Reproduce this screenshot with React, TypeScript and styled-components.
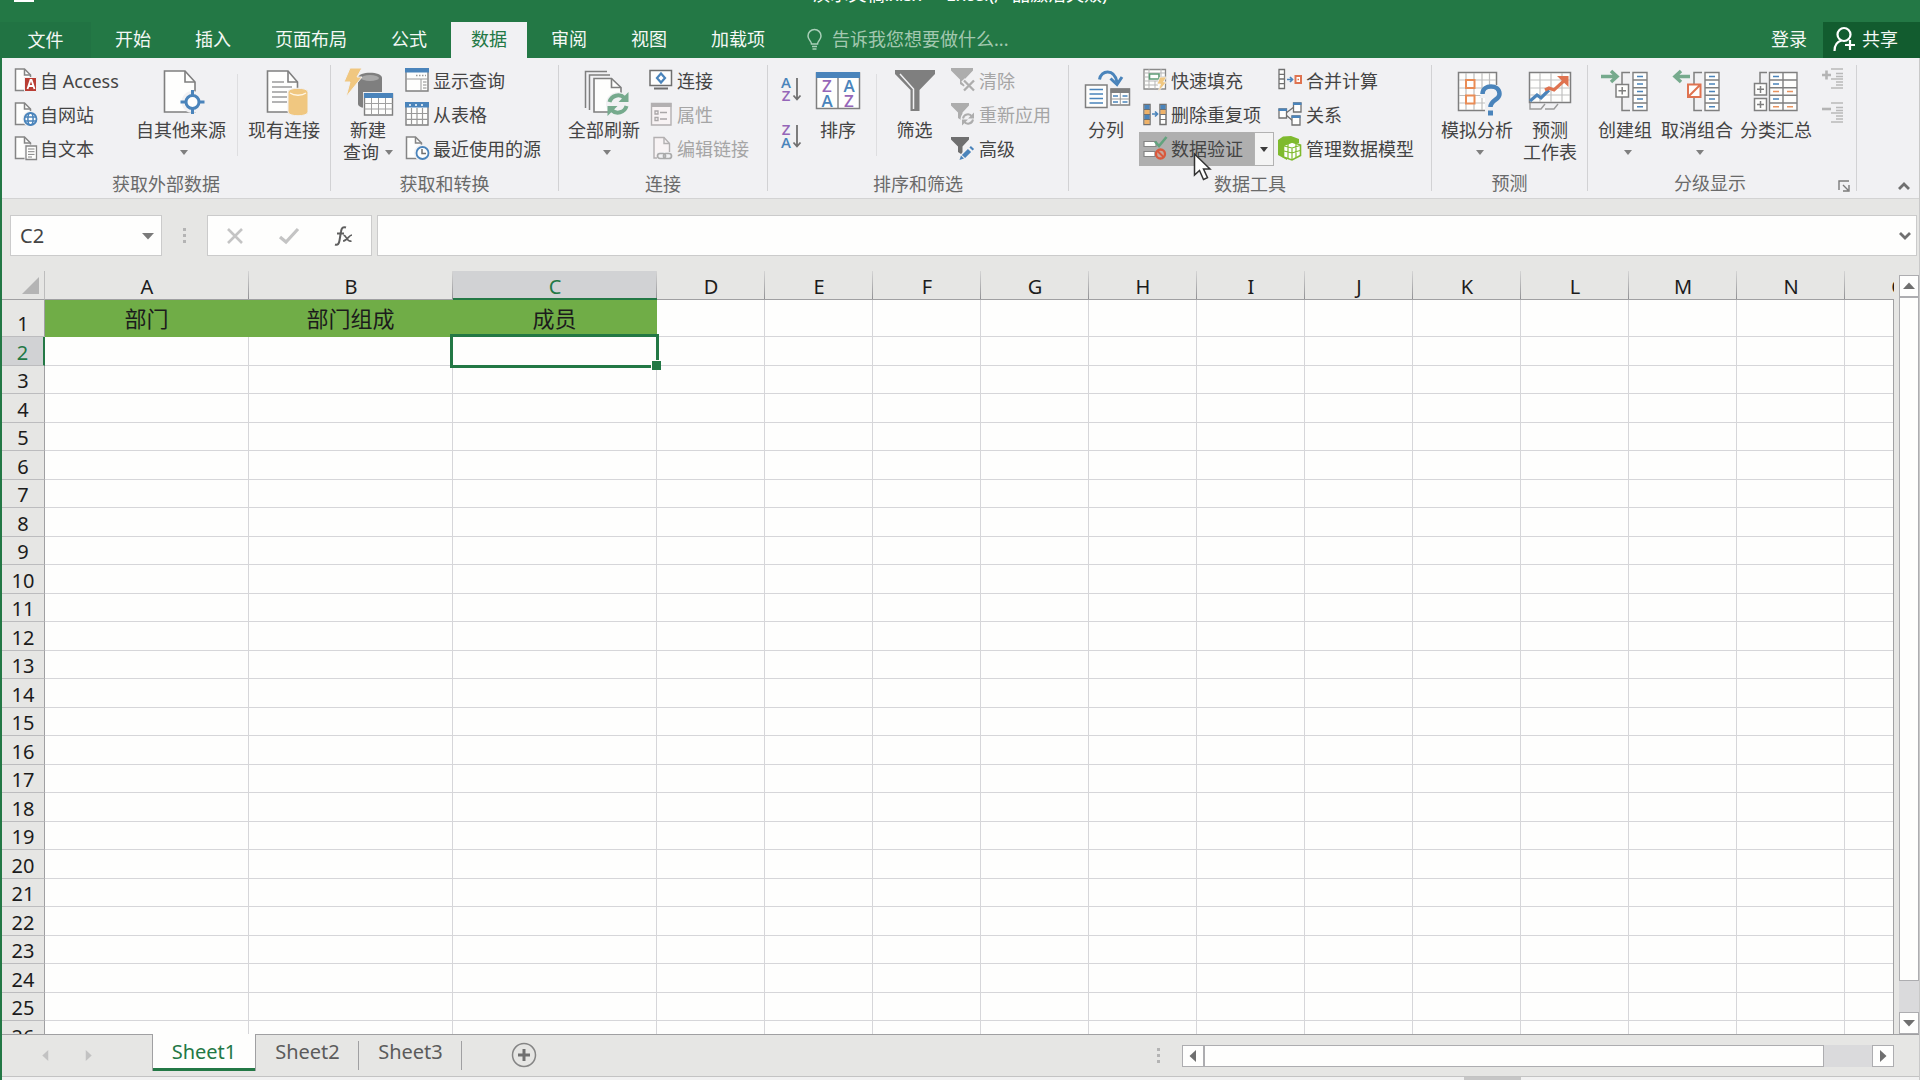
import React from "react";
import styled, { createGlobalStyle, css } from "styled-components";

const color = {
  green: "#237845",
  greenDark: "#125c2f",
  ribbon: "#f1f1f3",
  chrome: "#e6e6e4",
  white: "#fefefd",
  text: "#444444",
  mute: "#6a6a6a",
  off: "#a5a5a5",
  line: "#d2d2d4",
  edge: "#a0a0a2",
  blue: "#4a84bb",
  gray: "#7f7f7f",
  sand: "#f0c780",
  mint: "#76aa8d",
  orange: "#df7350",
  violet: "#9566b8",
};

const GlobalStyle = createGlobalStyle`
  * { box-sizing: border-box; }
  body {
    margin: 0;
    overflow: hidden;
    font-family: "Noto Sans", "Noto Sans CJK SC", sans-serif;
    font-size: 18px;
    color: ${color.text};
  }
  button, input {
    margin: 0;
    padding: 0;
    border: 0;
    background: none;
    font: inherit;
    color: inherit;
  }
`;

/* ---------- window ---------- */

const Window = styled.div`
  display: flex;
  flex-direction: column;
  height: 100vh;
  background: ${color.chrome};
`;

const TitleBar = styled.header`
  display: flex;
  flex: none;
  height: 22px;
  padding: 0 14px;
  overflow: hidden;
  background: ${color.green};
  color: #ffffff;
`;

const TitleSide = styled.div`
  flex: 1;
  margin-top: -20px;
`;

const TitleText = styled.h1`
  margin: -18px 0 0;
  font-size: 18px;
  font-weight: 400;
  line-height: 24px;
  white-space: pre;
`;

const TabBar = styled.nav`
  display: flex;
  flex: none;
  align-items: stretch;
  height: 36px;
  background: ${color.green};
  color: #f4f8f5;
`;

const FileTab = styled.button`
  width: 91px;
  margin-right: 4px;
  padding-bottom: 2px;
  background: #217343;
`;

const Tabs = styled.div`
  display: flex;
  gap: 4px;
`;

const Tab = styled.button<{ $active?: boolean }>`
  padding: 0 20px 4px;
  white-space: nowrap;
  ${(p) => p.$active && css`background: ${color.ribbon}; color: ${color.green};`}
`;

const TellMe = styled.label`
  display: flex;
  flex: 1;
  align-items: center;
  gap: 10px;
  padding: 0 0 2px 22px;
`;

const TellMeInput = styled.input`
  width: 240px;
  outline: 0;
  &::placeholder { color: #a3c8b0; opacity: 1; }
`;

const SignIn = styled.button`
  padding: 0 16px 4px;
`;

const Share = styled.button`
  display: flex;
  align-items: center;
  gap: 5px;
  width: 97px;
  padding: 0 0 4px 10px;
  background: ${color.greenDark};
`;

const Body = styled.main`
  display: flex;
  flex: 1;
  flex-direction: column;
  min-height: 0;
  border-left: 2px solid ${color.green};
  border-right: 1px solid #c9c9c9;
`;

/* ---------- ribbon ---------- */

const Ribbon = styled.section`
  display: flex;
  flex: none;
  height: 141px;
  background: ${color.ribbon};
  border-bottom: 1px solid #d3d3d3;
`;

const GroupBox = styled.section`
  display: flex;
  flex-direction: column;
  padding-top: 6px;
`;

const GroupBody = styled.div<{ $left?: number; $right?: number }>`
  display: flex;
  height: 102px;
  padding: 0 ${(p) => p.$right ?? 0}px 0 ${(p) => p.$left ?? 4}px;
`;

const GroupFoot = styled.footer`
  display: flex;
  align-items: center;
  height: 34px;
  padding-top: 4px;
  color: ${color.mute};
`;

const GroupTitle = styled.h2`
  flex: 1;
  margin: 0;
  font-size: 18px;
  font-weight: 400;
  line-height: 24px;
  text-align: center;
`;

const Launcher = styled.button`
  width: 24px;
  height: 20px;
`;

const Divider = styled.i`
  flex: none;
  width: 1px;
  margin: 7px 0;
  background: ${color.line};
`;

const InnerDivider = styled.i<{ $before: number; $after: number }>`
  flex: none;
  width: 1px;
  margin: 10px ${(p) => p.$after}px 10px ${(p) => p.$before}px;
  background: #dedee0;
`;

const LargeButton = styled.button<{ $width: number }>`
  display: flex;
  flex: none;
  flex-direction: column;
  align-items: center;
  justify-content: flex-start;
  width: ${(p) => p.$width}px;
  padding-top: 4px;
  line-height: 22px;
  white-space: nowrap;
`;

const Caption = styled.span`
  display: flex;
  align-items: center;
  gap: 6px;
  height: 22px;
  &:first-of-type { margin-top: 3px; }
`;

const CaretLine = styled(Caption)`
  padding-left: 6px;
`;

const Caret = styled.i<{ $dark?: boolean }>`
  border: 4px solid transparent;
  border-top: 5px solid ${(p) => (p.$dark ? "#3b3b3b" : color.gray)};
  border-bottom: 0;
`;

const SmallColumn = styled.div<{ $width: number }>`
  display: flex;
  flex: none;
  flex-direction: column;
  width: ${(p) => p.$width}px;
`;

const SmallButton = styled.button`
  display: flex;
  align-items: center;
  align-self: flex-start;
  gap: 4px;
  height: 34px;
  padding: 0 4px 2px;
  white-space: nowrap;
  &:disabled { color: ${color.off}; }
`;

const SourceButton = styled(SmallButton)`
  gap: 2px;
`;

const SortButton = styled.button`
  width: 38px;
  height: 47px;
  padding-top: 8px;
`;

const Split = styled.div`
  position: relative;
  display: flex;
  height: 34px;
`;

const SplitMain = styled(SmallButton)`
  flex: 1;
  background: #afafaf;
`;

const SplitArrow = styled.button`
  display: grid;
  place-items: center;
  width: 20px;
  background: #f4f4f4;
  border: 1px solid #b2b2b2;
`;

const Pointer = styled.svg`
  position: absolute;
  z-index: 2;
  top: 20px;
  left: 54px;
  width: 20px;
  height: 30px;
`;

const Collapse = styled.button`
  align-self: flex-end;
  margin-left: auto;
  width: 30px;
  height: 26px;
  padding-bottom: 4px;
`;

/* ---------- formula bar ---------- */

const FormulaBar = styled.section`
  display: flex;
  flex: none;
  height: 72px;
  padding: 16px 2px 15px 8px;
`;

const Field = styled.div`
  display: flex;
  align-items: center;
  background: ${color.white};
  border: 1px solid #cbcbcb;
`;

const NameField = styled(Field)`
  width: 152px;
  padding-left: 9px;
`;

const NameInput = styled.input`
  flex: 1;
  min-width: 0;
  font-size: 20px;
`;

const NameArrow = styled.button`
  width: 26px;
  height: 100%;
  line-height: 0;
`;

const Grip = styled.i`
  align-self: center;
  width: 3px;
  height: 15px;
  background: repeating-linear-gradient(#b4b4b4 0 3px, transparent 3px 6px);
`;

const BarGrip = styled(Grip)`
  margin: 0 21px;
`;

const FormulaTools = styled(Field)`
  width: 165px;
  margin-right: 5px;
`;

const ToolButton = styled.button`
  flex: 1;
  height: 100%;
  line-height: 0;
`;

const FormulaField = styled(Field)`
  flex: 1;
`;

const FormulaInput = styled.input`
  flex: 1;
  height: 100%;
  padding: 0 8px;
`;

const ExpandButton = styled.button`
  width: 22px;
  line-height: 0;
`;

/* ---------- sheet ---------- */

const SheetArea = styled.section`
  display: flex;
  flex: 1;
  gap: 5px;
  min-height: 0;
`;

const Viewport = styled.div`
  position: relative;
  flex: 1;
  min-width: 0;
  overflow: hidden;
  &::after {
    content: "";
    position: absolute;
    top: 28px;
    right: 0;
    bottom: 0;
    width: 1px;
    background: ${color.edge};
  }
`;

const Sheet = styled.table`
  width: 1951px;
  table-layout: fixed;
  border-collapse: separate;
  border-spacing: 0;
  background: ${color.white};
  color: #1c1c1c;
  font-size: 20px;
  line-height: 24px;
`;

const Col = styled.col<{ $width: number }>`
  width: ${(p) => p.$width}px;
`;

const Corner = styled.th`
  height: 29px;
  padding: 0 5px 0 0;
  background: ${color.chrome};
  border-right: 1px solid #bdbdbd;
  border-bottom: 1px solid ${color.edge};
  line-height: 0;
  text-align: right;
`;

const ColHead = styled.th<{ $active?: boolean }>`
  height: 29px;
  padding: 2px 0 0;
  background:
    linear-gradient(#d5d5d5, #8f8f92) right / 1px 100% no-repeat,
    ${(p) => (p.$active ? "#d1d2d4" : color.chrome)};
  box-shadow: inset 0 ${(p) => (p.$active ? `-2px ${color.green}` : `-1px ${color.edge}`)};
  color: ${(p) => (p.$active ? color.green : "inherit")};
  font-weight: 400;
`;

const RowHead = styled.th<{ $active?: boolean }>`
  padding: 0;
  vertical-align: bottom;
  background: ${(p) => (p.$active ? "#d1d2d4" : color.chrome)};
  border-right: ${(p) => (p.$active ? `2px solid ${color.green}` : `1px solid ${color.edge}`)};
  border-bottom: 1px solid #bcbcbe;
  color: ${(p) => (p.$active ? color.green : "inherit")};
  font-weight: 400;
`;

const Row = styled.tr`
  height: 28px;
  &:nth-child(even) { height: 29px; }
  &:first-child { height: 37px; }
`;

const Cell = styled.td<{ $filled?: boolean }>`
  position: relative;
  padding: 0;
  border-right: 1px solid #d6d6d9;
  border-bottom: 1px solid #d6d6d9;
  ${(p) => p.$filled && css`
    background: #70ad47;
    border-color: #70ad47;
    font-size: 22px;
    text-align: center;
  `}
`;

const Selection = styled.div`
  position: absolute;
  z-index: 1;
  inset: -3px;
  border: 3px solid ${color.green};
  &::after {
    content: "";
    position: absolute;
    right: -5px;
    bottom: -5px;
    width: 9px;
    height: 9px;
    background: ${color.green};
    border: solid #ffffff;
    border-width: 1px 0 0 1px;
  }
`;

const VScroll = styled.div`
  display: flex;
  flex-direction: column;
  width: 20px;
  margin-top: 4px;
  background: #dadadc;
`;

const ScrollArrow = styled.button`
  flex: none;
  width: 22px;
  height: 22px;
  background: ${color.white};
  border: 1px solid #adadb0;
  line-height: 0;
`;

const VArrow = styled(ScrollArrow)`
  width: 20px;
`;

const Thumb = styled.div`
  flex: 1;
  background: ${color.white};
  border: 1px solid #adadb0;
`;

const TrackRest = styled.div<{ $size: number }>`
  flex: 0 0 ${(p) => p.$size}px;
`;

/* ---------- bottom ---------- */

const SheetBar = styled.footer`
  display: flex;
  flex: none;
  height: 42px;
  border-top: 1px solid ${color.edge};
`;

const SheetNav = styled.div`
  display: flex;
  align-items: center;
  width: 150px;
  padding-left: 22px;
`;

const NavButton = styled.button`
  width: 43px;
  height: 36px;
  line-height: 0;
`;

const SheetTab = styled.button<{ $active?: boolean }>`
  position: relative;
  width: 103px;
  height: 35px;
  padding-bottom: 2px;
  font-size: 20px;
  line-height: 24px;
  color: #5b5b5b;
  ${(p) => p.$active
    ? css`
        width: 104px;
        height: 37px;
        margin-top: -1px;
        background: ${color.white};
        border: solid ${color.edge};
        border-width: 0 1px;
        box-shadow: inset 0 -3px ${color.green};
        color: ${color.green};
      `
    : css`
        &::after {
          content: "";
          position: absolute;
          top: 6px;
          right: 0;
          width: 1px;
          height: 29px;
          background: ${color.edge};
        }
      `}
`;

const AddSheet = styled.button`
  width: 28px;
  height: 40px;
  margin-left: 48px;
  line-height: 0;
`;

const BottomGrip = styled(Grip)`
  margin: 0 22px 0 auto;
`;

const HScroll = styled.div`
  display: flex;
  flex: 0 1 712px;
  align-self: center;
  height: 22px;
  margin-right: 25px;
  background: #dadadc;
`;

const StatusBar = styled.div`
  display: flex;
  flex: none;
  justify-content: flex-end;
  height: 4px;
  padding-right: 398px;
  background: #f1f1f1;
  border-top: 1px solid #c3c3c3;
`;

const StatusMark = styled.i`
  width: 57px;
  background: #c6c6c6;
`;

/* ---------- icons ---------- */

const Svg = styled.svg<{ $w: number; $h: number }>`
  flex: none;
  display: block;
  width: ${(p) => p.$w}px;
  height: ${(p) => p.$h}px;
  overflow: visible;
`;

const InlineSvg = styled(Svg)`
  display: inline-block;
`;

const Letter = styled.text<{ $size: number }>`
  font-family: "Open Sans", "Noto Sans", sans-serif;
  font-size: ${(p) => p.$size}px;
  font-weight: 600;
  text-anchor: middle;
`;

type Kids = { children: React.ReactNode };
const Big = ({ children }: Kids) => (
  <Svg $w={48} $h={48} viewBox="0 0 48 48" fill="none" aria-hidden="true">{children}</Svg>
);
const Small = ({ children }: Kids) => (
  <Svg $w={24} $h={24} viewBox="0 0 24 24" fill="none" aria-hidden="true">{children}</Svg>
);

const SmallPage = () => (
  <>
    <path d="M1.500 1h9l6 6v15.500h-15z" fill="#fefefd" stroke="#858585" strokeWidth="1.500" />
    <path d="M10.500 1v6h6" stroke="#858585" strokeWidth="1.500" />
  </>
);

const AccessIcon = () => (
  <Small>
    <SmallPage />
    <path d="M10.500 9.500h12v14h-12z" fill="#b93d34" stroke="#f1f1f3" />
    <path d="M13.500 21l3-9h1l3 9M14.500 18h5" stroke="#fff" strokeWidth="1.800" />
  </Small>
);

const WebIcon = () => (
  <Small>
    <SmallPage />
    <circle cx="16.500" cy="17" r="6.500" fill="#fefefd" stroke="#f1f1f3" strokeWidth="3" />
    <circle cx="16.500" cy="17" r="6" fill="#fefefd" stroke={color.blue} strokeWidth="1.800" />
    <ellipse cx="16.500" cy="17" rx="2.600" ry="6" stroke={color.blue} strokeWidth="1.500" />
    <path d="M11 15h11M11 19h11" stroke={color.blue} strokeWidth="1.500" />
  </Small>
);

const TextIcon = () => (
  <Small>
    <SmallPage />
    <path d="M12 10h10.500v13.500H12z" fill="#fefefd" stroke="#f1f1f3" strokeWidth="3" />
    <path d="M12 10h10.500v13.500H12z" fill="#fefefd" stroke="#858585" strokeWidth="1.300" />
    <path d="M14 13h6.500M14 15.700h6.500M14 18.400h6.500M14 21h4" stroke="#858585" />
  </Small>
);

const OtherSourceIcon = () => (
  <Big>
    <path d="M7.500 3h20.500l10 11v30h-30.500z" fill="#fefefd" stroke={color.gray} strokeWidth="1.600" />
    <path d="M28 3v11h10" stroke={color.gray} strokeWidth="1.600" />
    <circle cx="35.500" cy="34" r="11" fill="#f1f1f3" />
    <circle cx="35.500" cy="34" r="6.500" fill="#fefefd" stroke={color.blue} strokeWidth="3" />
    <path d="M35.500 22v6M35.500 40v6M23.500 34h6M41.500 34h6" stroke={color.blue} strokeWidth="3" />
  </Big>
);

const ConnectionsIcon = () => (
  <Big>
    <path d="M7.500 3h20.500l9.500 11v30h-30z" fill="#fefefd" stroke={color.gray} strokeWidth="1.600" />
    <path d="M28 3v11h9.500" stroke={color.gray} strokeWidth="1.600" />
    <path d="M12 14h12M12 19h20M12 24h15M12 29h15M12 34h15" stroke="#9a9a9a" strokeWidth="1.500" />
    <path d="M28 24c0-5 20-5 20 0v20c0 5-20 5-20 0z" fill={color.sand} stroke="#f1f1f3" />
    <path d="M30 25c4 3 12 3 16 0" stroke="#fff6e4" strokeWidth="1.300" />
  </Big>
);

const NewQueryIcon = () => (
  <Big>
    <path d="M14 10c0-7 24-7 24 0v26c0 6-24 6-24 0z" fill={color.gray} />
    <ellipse cx="26" cy="10" rx="9" ry="3" fill="#a8a8a8" />
    <path d="M6 0h12l-5 9h5L2 29l4-15H0z" fill={color.sand} stroke="#f1f1f3" />
    <path d="M19 24h30v24h-30z" fill="#f1f1f3" />
    <path d="M20.500 26h28v21h-28z" fill="#fefefd" stroke={color.gray} strokeWidth="1.400" />
    <path d="M20 25h29v5H20z" fill={color.blue} />
    <path d="M27.500 30v17M34.500 30v17M41.500 30v17M20.500 35.500h28M20.500 41h28" stroke="#a0a0a0" />
  </Big>
);

const QueryPaneIcon = () => (
  <Small>
    <path d="M1 1.500h22v21.500H1z" fill="#fefefd" stroke={color.gray} strokeWidth="1.400" />
    <path d="M0 0h24v4.500H0z" fill={color.blue} />
    <path d="M1 11h22M16 11v12" stroke="#9a9a9a" />
    <path d="M11 7.500h10" stroke="#9a9a9a" strokeWidth="1.500" strokeDasharray="1.500 1.500" />
    <path d="M18 14h3.500M18 17h3.500M18 20h3.500" stroke="#8a8a8a" />
  </Small>
);

const TableIcon = () => (
  <Small>
    <path d="M1 1.500h22v21.500H1z" fill="#fefefd" stroke={color.gray} strokeWidth="1.400" />
    <path d="M0 0h24v5.500H0z" fill={color.blue} />
    <path d="M4 3h2M10 3h2M16 3h2" stroke="#fff" strokeWidth="1.500" />
    <path d="M6.500 6v17M12 6v17M17.500 6v17M1 11.500h22M1 17.300h22" stroke="#999" strokeWidth="1.200" />
  </Small>
);

const RecentIcon = () => (
  <Small>
    <SmallPage />
    <circle cx="17.500" cy="17" r="6.500" stroke="#f1f1f3" strokeWidth="4" />
    <circle cx="17.500" cy="17" r="6" fill="#fefefd" stroke={color.blue} strokeWidth="1.800" />
    <path d="M17 13v4.500h4" stroke="#707070" strokeWidth="1.500" />
  </Small>
);

const RefreshAllIcon = () => (
  <Big>
    <path d="M5.500 40V3.500H27M9.500 42V7H30" stroke={color.gray} strokeWidth="1.500" />
    <path d="M14 44V10.500h17.500l9.500 9V44z" fill="#fefefd" stroke={color.gray} strokeWidth="1.600" />
    <path d="M31.500 10.500V19.500H41" stroke={color.gray} strokeWidth="1.600" />
    <circle cx="38" cy="36" r="12" fill="#f1f1f3" />
    <path d="M29.500 34a9 9 0 0 1 15-4M46.500 38a9 9 0 0 1-15 4" stroke={color.mint} strokeWidth="4" />
    <path d="M48.500 24v10h-10zM27.500 48V38h10z" fill={color.mint} />
  </Big>
);

const LinkIcon = () => (
  <Small>
    <path d="M1 2.500h21.500v15H1z" fill="#fefefd" stroke="#6f6f6f" strokeWidth="1.500" />
    <path d="M5 20.500h14" stroke="#6f6f6f" strokeWidth="2" />
    <path d="M12 5.500l4 4.500-4 4.500L8 10z" stroke={color.blue} strokeWidth="2.200" />
    <circle cx="12" cy="10" r="1.300" fill="#fff" />
  </Small>
);

const PropertiesIcon = () => (
  <Small>
    <path d="M2.500 1.500h19.500V23H2.500z" fill="#f8f3f4" stroke="#b3b0b1" strokeWidth="1.400" />
    <path d="M2 1h20.500v4H2z" fill="#b3b0b1" />
    <path d="M6 9h3v3H6zM6 15.500h3v3H6zM11 10.500h7M11 17h7" stroke="#aaa7a8" strokeWidth="1.300" />
  </Small>
);

const EditLinkIcon = () => (
  <Small>
    <path d="M5 1.500h10l5.500 6V22H5z" fill="#f8f3f4" stroke="#b3b0b1" strokeWidth="1.400" />
    <path d="M15 1.500v6h5.500" stroke="#b3b0b1" strokeWidth="1.400" />
    <path d="M8 16h16v8H8z" fill="#f1f1f3" />
    <rect x="8.500" y="17.500" width="8" height="5" rx="2.500" stroke="#aaa" strokeWidth="1.700" />
    <rect x="14.500" y="17.500" width="8" height="5" rx="2.500" stroke="#aaa" strokeWidth="1.700" />
  </Small>
);

const SortOrderIcon = ({ desc }: { desc?: boolean }) => (
  <InlineSvg $w={20} $h={28} viewBox="0 0 20 28" fill="none" aria-hidden="true">
    <Letter $size={15} x="5" y="13" fill={desc ? color.violet : color.blue}>{desc ? "Z" : "A"}</Letter>
    <Letter $size={15} x="5" y="26" fill={desc ? color.blue : color.violet}>{desc ? "A" : "Z"}</Letter>
    <path d="M16 3v21M12.500 20.500l3.500 4 3.500-4" stroke="#707070" strokeWidth="1.800" />
  </InlineSvg>
);

const SortIcon = () => (
  <Big>
    <path d="M2.500 5h43v35.500h-43z" fill="#fefefd" stroke={color.gray} strokeWidth="1.500" />
    <path d="M2 4h44v6H2z" fill={color.blue} />
    <path d="M24 10v30" stroke={color.gray} strokeWidth="1.400" />
    <Letter $size={17} x="13" y="24" fill={color.violet}>Z</Letter>
    <Letter $size={17} x="13" y="39" fill={color.blue}>A</Letter>
    <Letter $size={17} x="35" y="24" fill={color.blue}>A</Letter>
    <Letter $size={17} x="35" y="39" fill={color.violet}>Z</Letter>
  </Big>
);

const FilterIcon = () => (
  <Big>
    <path d="M4 2h40v4L28.500 22v21h-9V22L4 6z" fill={color.gray} />
    <path d="M9 6l13.500 15V41" stroke="#f1f1f3" strokeWidth="1.500" />
  </Big>
);

const SmallFunnel = ({ fill }: { fill: string }) => (
  <path d="M0 1h18v2.500l-6.500 7V19L7 16v-5.500L0 3.500z" fill={fill} />
);

const ClearIcon = () => (
  <Small>
    <path d="M0 0h22v2.500l-8.500 9V19L9 16v-4.500L0 2.500z" fill="#adadad" />
    <path d="M12 12l11 11M23 12L12 23" stroke="#f1f1f3" strokeWidth="5" />
    <path d="M13 12.500l10 10M23 12.500l-10 10" stroke="#adadad" strokeWidth="2.300" />
  </Small>
);

const ReapplyIcon = () => (
  <Small>
    <SmallFunnel fill="#adadad" />
    <circle cx="17" cy="17" r="7.500" fill="#f1f1f3" />
    <path d="M12 16.500a5 5 0 0 1 9-2M22 17.500a5 5 0 0 1-9 2" stroke="#adadad" strokeWidth="2" />
    <path d="M23 10.500v6h-6zM11 23.500v-6h6z" fill="#adadad" />
  </Small>
);

const AdvancedIcon = () => (
  <Small>
    <SmallFunnel fill="#6f6f6f" />
    <path d="M10 23l12-12" stroke="#f1f1f3" strokeWidth="7" />
    <path d="M12.500 20.500l6-6M20 13l1.500-1.500" stroke={color.blue} strokeWidth="4.500" />
    <path d="M8.500 24l1.500-4.500 3 3z" fill={color.blue} />
  </Small>
);

const SplitColumnsIcon = () => (
  <Big>
    <path d="M3.500 17h21.500v22.500H3.500z" fill="#fefefd" stroke={color.gray} strokeWidth="1.500" />
    <path d="M7.500 21.500h13.500M7.500 26h13.500M7.500 30.500h13.500M7.500 35h13.500" stroke={color.blue} strokeWidth="1.600" />
    <path d="M29 21h18.500v16H29z" fill="#fefefd" stroke={color.gray} strokeWidth="1.500" />
    <path d="M28.500 20.500h19.500v4.500H28.500z" fill={color.gray} />
    <path d="M38.300 25v12M29 31h18.500" stroke="#999" />
    <path d="M31 28h5M31 34h5M40.500 28h5M40.500 34h5" stroke={color.blue} strokeWidth="1.500" />
    <path d="M17.500 11.500C19 2 32 0 35 14" stroke={color.blue} strokeWidth="3" />
    <path d="M28.500 10.500l6.500 6 5-7.500" stroke={color.blue} strokeWidth="3" />
  </Big>
);

const FlashFillIcon = () => (
  <Small>
    <path d="M1 1.500h21.500v19.500H1z" fill="#fefefd" stroke="#8a8a8a" strokeWidth="1.300" />
    <path d="M1 5h21M1 9h21M1 13h14M1 17h14M6 1v20M12 13v8M18 1v8" stroke="#b5b5b5" />
    <path d="M6.500 6h9.500v5H6.500z" fill="#fefefd" stroke="#5d9c76" strokeWidth="1.600" />
    <path d="M17 9h6.500l-3 5h3L15 24l2.500-8H14z" fill={color.sand} stroke="#f1f1f3" strokeWidth=".8" />
  </Small>
);

const DuplicatesIcon = () => (
  <Small>
    <path d="M1 2.500h6v20H1zM17 2.500h6v20h-6z" fill="#fefefd" stroke="#707070" strokeWidth="1.500" />
    <path d="M1.500 3h5v4h-5zM1.500 13h5v4h-5zM17.500 3h5v4h-5z" fill={color.blue} />
    <path d="M1.500 8h5v4h-5zM1.500 18h5v4h-5zM17.500 8h5v4h-5z" fill="#efb268" />
    <path d="M1 7.500h6M1 12.500h6M1 17.500h6M17 7.500h6M17 12.500h6M17 17.500h6" stroke="#707070" />
    <path d="M9 12h5M12 9.500l2.500 2.500-2.500 2.500" stroke={color.blue} strokeWidth="1.700" />
  </Small>
);

const ValidationIcon = () => (
  <Small>
    <path d="M1 5.500h12v5H1zM1 15.500h11v5H1z" fill="#fefefd" stroke="#858585" strokeWidth="1.200" />
    <path d="M12 5.500l4 4.500L23.500 1" stroke="#62a37e" strokeWidth="2.600" />
    <circle cx="17.500" cy="18" r="4.500" fill="#c9a79c" stroke="#d9583c" strokeWidth="2.300" />
    <path d="M14.500 15l6 6" stroke="#d9583c" strokeWidth="2" />
  </Small>
);

const ConsolidateIcon = () => (
  <Small>
    <path d="M1 1.500h5.500v19H1zM1 6.300h5.500M1 11h5.500M1 15.700h5.500" fill="#fefefd" stroke="#707070" strokeWidth="1.300" />
    <path d="M9 11.500h5M12 9l2.500 2.500L12 14" stroke={color.blue} strokeWidth="1.700" />
    <path d="M17.500 8h5.500v7h-5.500z" fill="#fefefd" stroke={color.orange} strokeWidth="2" />
    <path d="M19.500 11.500h1.500" stroke={color.orange} strokeWidth="1.300" />
  </Small>
);

const RelationsIcon = () => (
  <Small>
    <path d="M8 11l8-6M8 13l7 6" stroke="#707070" strokeWidth="1.300" />
    <path d="M1 7h7.500v9H1zM15.500 1h7.500v9h-7.500zM14 14h8v9h-8z" fill="#fefefd" stroke="#707070" strokeWidth="1.300" />
    <path d="M.5 6.500H9V9H.5zM15 .5h8.500V3H15zM13.500 13.500h9V16h-9z" fill={color.blue} />
  </Small>
);

const ModelIcon = () => (
  <Small>
    <path d="M0 4l5-3.500 8-.5 8 3v4L9 8v16l-9-5z" fill="#7fba2e" />
    <path d="M5.500 9.500L14 6l8.500 3v10.500L14 24l-8.500-3z" fill="#fefefd" stroke="#7fba2e" strokeWidth="1.600" />
    <path d="M14 11.500v12M6 10l8 2 8-2.500M6 15l8 2 8-2.500M10 8v14.500M18 8v14" stroke="#7fba2e" strokeWidth="1.200" />
  </Small>
);

const WhatIfIcon = () => (
  <Big>
    <path d="M5.500 4.500h38v38h-38z" fill="#fefefd" stroke={color.gray} strokeWidth="1.500" />
    <path d="M13 5v37M21 5v37M29 5v37M36.500 5v37M6 12h37M6 20h37M6 27.500h37M6 35h37" stroke="#bdbdbd" strokeWidth="1.200" />
    <path d="M13 12h8.500v8H13zM13 27.500h8.500v8H13z" fill="#fefefd" stroke="#e98c55" strokeWidth="2" />
    <path d="M33 17h17v32H32V30h-6z" fill="#f1f1f3" />
    <path d="M29.500 26c0-10 17-10 17 0 0 6-9 6-9 13" stroke={color.blue} strokeWidth="4.500" />
    <path d="M35 42.500h5v5h-5z" fill={color.blue} />
  </Big>
);

const ForecastIcon = () => (
  <Big>
    <path d="M3.500 4.500h41v30h-41z" fill="#fefefd" stroke={color.gray} strokeWidth="1.500" />
    <path d="M14 5v29M25 5v29M36 5v29M4 12h40M4 20h40M4 27h40" stroke="#c0c0c0" strokeWidth="1.200" />
    <path d="M4 35v6h11l4-5M19 41h9l4-5" stroke="#9a9a9a" strokeWidth="1.400" />
    <path d="M4 33l7-6 4 3 8-8" stroke={color.blue} strokeWidth="3.200" />
    <path d="M19 22l4-2 5 2 12-11" stroke={color.orange} strokeWidth="3.200" />
    <path d="M31 8h11.500v11z" fill={color.orange} />
  </Big>
);

const OutlineCells = ({ x }: { x: number }) => (
  <>
    <path d={`M${x} 4.500h14v38h-14zM${x} 12h14M${x} 19.700h14M${x} 27.300h14M${x} 35h14`} fill="#fefefd" stroke={color.gray} strokeWidth="1.400" />
    <path d={`M${x + 4} 8.500h6M${x + 4} 16h6M${x + 4} 23.500h6M${x + 4} 31h6M${x + 4} 38.800h6`} stroke={color.blue} strokeWidth="1.600" />
  </>
);

const GroupIcon = () => (
  <Big>
    <path d="M0 8.500h15M10 3l6 5.500-6 5.500" stroke={color.mint} strokeWidth="3.500" />
    <path d="M29 4.500h-8V16M21 29v13.500h8" stroke={color.gray} strokeWidth="1.500" />
    <path d="M15 16.500h12.500v12.500H15z" fill="#fefefd" stroke={color.gray} strokeWidth="1.500" />
    <path d="M21.200 19v7.500M17.500 22.700H25" stroke={color.gray} strokeWidth="1.500" />
    <OutlineCells x={32} />
  </Big>
);

const UngroupIcon = () => (
  <Big>
    <path d="M17 8.500H3M8 3L2 8.500 8 14" stroke={color.mint} strokeWidth="3.500" />
    <path d="M29 4.500h-8V16M21 29v13.500h8" stroke={color.gray} strokeWidth="1.500" />
    <path d="M15 16.500h12.500v12.500H15zM16 28l11-11" fill="#fefefd" stroke={color.orange} strokeWidth="2" />
    <OutlineCells x={32} />
  </Big>
);

const SubtotalIcon = () => (
  <Big>
    <path d="M15 4.500H8V15" stroke={color.gray} strokeWidth="1.500" />
    <path d="M2.500 15.500h12V27h-12zM2.500 30.500h12v12h-12z" fill="#fefefd" stroke={color.gray} strokeWidth="1.500" />
    <path d="M8.500 18v7M5 21.300h7M8.500 33v7M5 36.500h7" stroke={color.gray} strokeWidth="1.500" />
    <path d="M17.500 4.500h27.500v38H17.500zM31 4.500v38M17.500 12H45M17.500 19.700H45M17.500 27.300H45M17.500 35H45" fill="#fefefd" stroke={color.gray} strokeWidth="1.400" />
    <path d="M21 8.500h6M21 16h6M21 31h6" stroke={color.blue} strokeWidth="1.600" />
    <path d="M21 23.500h6M21 38.800h6M35 23.500h6M35 38.800h6" stroke="#e9935f" strokeWidth="1.600" />
  </Big>
);

const DetailIcon = ({ plus }: { plus?: boolean }) => (
  <Small>
    <path d={plus ? "M2 7h9M6.500 2.500v9" : "M2 7h9"} stroke="#b4b4b4" strokeWidth="2.600" />
    <path d="M11 1h12M16 5.500h7M16 8.500h7M11 11h12M16 14h7M16 17h7M11 20h12" stroke="#b9b9b9" strokeWidth="1.300" />
  </Small>
);

const Triangle = ({ dir, fill = "#6f6f6f", size = 12 }: { dir: number; fill?: string; size?: number }) => (
  <InlineSvg $w={size} $h={size} viewBox="0 0 12 12" aria-hidden="true">
    <path d="M0 3h12L6 9.500z" fill={fill} transform={`rotate(${dir} 6 6)`} />
  </InlineSvg>
);

const Chevron = ({ up }: { up?: boolean }) => (
  <InlineSvg $w={14} $h={10} viewBox="0 0 14 10" fill="none" aria-hidden="true">
    <path d={up ? "M2 8l5-5 5 5" : "M2 2l5 5 5-5"} stroke="#707070" strokeWidth="2.800" />
  </InlineSvg>
);

/* ---------- composed parts ---------- */

type GroupProps = Kids & { title: string; left?: number; right?: number; launcher?: boolean };
const Group = ({ title, left, right, launcher, children }: GroupProps) => (
  <>
    <GroupBox aria-label={title}>
      <GroupBody $left={left} $right={right}>{children}</GroupBody>
      <GroupFoot>
        <GroupTitle>{title}</GroupTitle>
        {launcher && (
          <Launcher aria-label="分级显示设置">
            <InlineSvg $w={12} $h={12} viewBox="0 0 12 12" fill="none" aria-hidden="true">
              <path d="M1 10V1h10M5 5l5 5M11 5v6H5" stroke="#7b7b7b" strokeWidth="1.400" />
            </InlineSvg>
          </Launcher>
        )}
      </GroupFoot>
    </GroupBox>
    <Divider />
  </>
);

type LargeProps = { icon: React.ReactNode; lines: string[]; width: number; menu?: boolean };
const Large = ({ icon, lines, width, menu }: LargeProps) => (
  <LargeButton $width={width}>
    {icon}
    {lines.map((line, i) => (
      <Caption key={line}>
        {line}
        {menu && i === 1 && <Caret />}
      </Caption>
    ))}
    {menu && lines.length === 1 && <CaretLine><Caret /></CaretLine>}
  </LargeButton>
);

const tabs = ["开始", "插入", "页面布局", "公式", "数据", "审阅", "视图", "加载项"];
const letters = "ABCDEFGHIJKLMNO".split("");
const rows = Array.from({ length: 26 }, (_, i) => i + 1);
const headings: Record<string, string> = { A: "部门", B: "部门组成", C: "成员" };

export default function App() {
  return (
    <Window>
      <GlobalStyle />
      <TitleBar>
        <TitleSide>
          <Svg $w={20} $h={22} viewBox="0 0 20 22" fill="none" aria-hidden="true">
            <path d="M1 3h18v18H1z" stroke="#fff" strokeWidth="2" />
          </Svg>
        </TitleSide>
        <TitleText>演示文稿.xlsx  -  Excel(产品激活失败)</TitleText>
        <TitleSide />
      </TitleBar>

      <TabBar>
        <FileTab>文件</FileTab>
        <Tabs>
          {tabs.map((t) => <Tab key={t} $active={t === "数据"}>{t}</Tab>)}
        </Tabs>
        <TellMe>
          <Svg $w={15} $h={21} viewBox="0 0 15 21" fill="none" aria-hidden="true">
            <path d="M4.500 15c0-3-3.500-4-3.500-8a6.500 6.500 0 0 1 13 0c0 4-3.500 5-3.500 8zM5 17.500h5M5.500 20h4" stroke="#a9cfb8" strokeWidth="1.500" />
          </Svg>
          <TellMeInput placeholder="告诉我您想要做什么..." aria-label="告诉我您想要做什么" />
        </TellMe>
        <SignIn>登录</SignIn>
        <Share>
          <Svg $w={24} $h={25} viewBox="0 0 24 25" fill="none" aria-hidden="true">
            <circle cx="11" cy="8.500" r="6.500" stroke="#fff" strokeWidth="2.200" />
            <path d="M1.500 25c0-6 3-9.500 7-10.500M17 14v10M12 19h10" stroke="#fff" strokeWidth="2.200" />
          </Svg>
          共享
        </Share>
      </TabBar>

      <Body>
        <Ribbon>
          <Group title="获取外部数据" left={8} right={2}>
            <SmallColumn $width={122}>
              <SourceButton><AccessIcon />自 Access</SourceButton>
              <SourceButton><WebIcon />自网站</SourceButton>
              <SourceButton><TextIcon />自文本</SourceButton>
            </SmallColumn>
            <Large icon={<OtherSourceIcon />} lines={["自其他来源"]} width={98} menu />
            <InnerDivider $before={7} $after={2} />
            <Large icon={<ConnectionsIcon />} lines={["现有连接"]} width={88} />
          </Group>

          <Group title="获取和转换">
            <Large icon={<NewQueryIcon />} lines={["新建", "查询"]} width={66} menu />
            <SmallColumn $width={157}>
              <SmallButton><QueryPaneIcon />显示查询</SmallButton>
              <SmallButton><TableIcon />从表格</SmallButton>
              <SmallButton><RecentIcon />最近使用的源</SmallButton>
            </SmallColumn>
          </Group>

          <Group title="连接">
            <Large icon={<RefreshAllIcon />} lines={["全部刷新"]} width={82} menu />
            <SmallColumn $width={122}>
              <SmallButton><LinkIcon />连接</SmallButton>
              <SmallButton disabled><PropertiesIcon />属性</SmallButton>
              <SmallButton disabled><EditLinkIcon />编辑链接</SmallButton>
            </SmallColumn>
          </Group>

          <Group title="排序和筛选">
            <SmallColumn $width={38}>
              <SortButton aria-label="升序"><SortOrderIcon /></SortButton>
              <SortButton aria-label="降序"><SortOrderIcon desc /></SortButton>
            </SmallColumn>
            <Large icon={<SortIcon />} lines={["排序"]} width={56} />
            <InnerDivider $before={10} $after={5} />
            <Large icon={<FilterIcon />} lines={["筛选"]} width={65} />
            <SmallColumn $width={121}>
              <SmallButton disabled><ClearIcon />清除</SmallButton>
              <SmallButton disabled><ReapplyIcon />重新应用</SmallButton>
              <SmallButton><AdvancedIcon />高级</SmallButton>
            </SmallColumn>
          </Group>

          <Group title="数据工具">
            <Large icon={<SplitColumnsIcon />} lines={["分列"]} width={66} />
            <SmallColumn $width={135}>
              <SmallButton><FlashFillIcon />快速填充</SmallButton>
              <SmallButton><DuplicatesIcon />删除重复项</SmallButton>
              <Split>
                <SplitMain><ValidationIcon />数据验证</SplitMain>
                <SplitArrow aria-label="数据验证选项"><Caret $dark /></SplitArrow>
                <Pointer viewBox="0 0 20 30" aria-hidden="true">
                  <path d="M1.500 2v21l5-4.500 4 9 4-1.800-4-8.700h6.500z" fill="#fff" stroke="#333" strokeWidth="1.500" />
                </Pointer>
              </Split>
            </SmallColumn>
            <SmallColumn $width={157}>
              <SmallButton><ConsolidateIcon />合并计算</SmallButton>
              <SmallButton><RelationsIcon />关系</SmallButton>
              <SmallButton><ModelIcon />管理数据模型</SmallButton>
            </SmallColumn>
          </Group>

          <Group title="预测" right={5}>
            <Large icon={<WhatIfIcon />} lines={["模拟分析"]} width={82} menu />
            <Large icon={<ForecastIcon />} lines={["预测", "工作表"]} width={64} />
          </Group>

          <Group title="分级显示" launcher>
            <Large icon={<GroupIcon />} lines={["创建组"]} width={66} menu />
            <Large icon={<UngroupIcon />} lines={["取消组合"]} width={78} menu />
            <Large icon={<SubtotalIcon />} lines={["分类汇总"]} width={80} />
            <SmallColumn $width={40}>
              <SmallButton disabled aria-label="显示明细数据"><DetailIcon plus /></SmallButton>
              <SmallButton disabled aria-label="隐藏明细数据"><DetailIcon /></SmallButton>
            </SmallColumn>
          </Group>

          <Collapse aria-label="折叠功能区"><Chevron up /></Collapse>
        </Ribbon>

        <FormulaBar>
          <NameField>
            <NameInput defaultValue="C2" aria-label="名称框" />
            <NameArrow aria-label="名称列表"><Triangle dir={0} fill="#7a7a7a" /></NameArrow>
          </NameField>
          <BarGrip />
          <FormulaTools>
            <ToolButton aria-label="取消">
              <InlineSvg $w={18} $h={16} viewBox="0 0 18 16" fill="none" aria-hidden="true">
                <path d="M2 1l14 14M16 1L2 15" stroke="#c4c4c4" strokeWidth="2.600" />
              </InlineSvg>
            </ToolButton>
            <ToolButton aria-label="输入">
              <InlineSvg $w={20} $h={16} viewBox="0 0 20 16" fill="none" aria-hidden="true">
                <path d="M1 9l6 5L19 1" stroke="#c4c4c4" strokeWidth="3.200" />
              </InlineSvg>
            </ToolButton>
            <ToolButton aria-label="插入函数">
              <InlineSvg $w={20} $h={20} viewBox="0 0 20 20" fill="none" aria-hidden="true">
                <path d="M1 18.500c3 1 4-1 4.500-4l1.500-9c.5-3.500 2-5 5-4M3 7.500h7" stroke="#5f5f5f" strokeWidth="2" />
                <path d="M9.500 9.500c3-1 3 7 8 5.500M18 9c-3 0-5 6-9 6" stroke="#5f5f5f" strokeWidth="1.700" />
              </InlineSvg>
            </ToolButton>
          </FormulaTools>
          <FormulaField>
            <FormulaInput aria-label="编辑栏" />
            <ExpandButton aria-label="展开编辑栏"><Chevron /></ExpandButton>
          </FormulaField>
        </FormulaBar>

        <SheetArea>
          <Viewport>
            <Sheet>
              <colgroup>
                <Col $width={43} />
                {letters.map((l) => <Col key={l} $width={l in headings ? 204 : 108} />)}
              </colgroup>
              <thead>
                <tr>
                  <Corner aria-label="全选">
                    <InlineSvg $w={17} $h={17} viewBox="0 0 17 17" aria-hidden="true">
                      <path d="M17 0v17H0z" fill="#b4b4b4" />
                    </InlineSvg>
                  </Corner>
                  {letters.map((l) => <ColHead key={l} scope="col" $active={l === "C"}>{l}</ColHead>)}
                </tr>
              </thead>
              <tbody>
                {rows.map((r) => (
                  <Row key={r}>
                    <RowHead scope="row" $active={r === 2}>{r}</RowHead>
                    {letters.map((l) => (
                      <Cell key={l} $filled={r === 1 && l in headings}>
                        {r === 1 && headings[l]}
                        {r === 2 && l === "C" && <Selection />}
                      </Cell>
                    ))}
                  </Row>
                ))}
              </tbody>
            </Sheet>
          </Viewport>
          <VScroll>
            <VArrow aria-label="向上滚动"><Triangle dir={180} /></VArrow>
            <Thumb />
            <TrackRest $size={31} />
            <VArrow aria-label="向下滚动"><Triangle dir={0} /></VArrow>
          </VScroll>
        </SheetArea>

        <SheetBar>
          <SheetNav>
            <NavButton aria-label="上一个工作表"><Triangle dir={90} fill="#c2c2c2" size={11} /></NavButton>
            <NavButton aria-label="下一个工作表"><Triangle dir={270} fill="#c2c2c2" size={11} /></NavButton>
          </SheetNav>
          <SheetTab $active>Sheet1</SheetTab>
          <SheetTab>Sheet2</SheetTab>
          <SheetTab>Sheet3</SheetTab>
          <AddSheet aria-label="新工作表">
            <InlineSvg $w={26} $h={26} viewBox="0 0 26 26" fill="none" aria-hidden="true">
              <circle cx="13" cy="13" r="11.500" stroke="#858585" strokeWidth="1.500" />
              <path d="M13 7v12M7 13h12" stroke="#707070" strokeWidth="3" />
            </InlineSvg>
          </AddSheet>
          <BottomGrip />
          <HScroll>
            <ScrollArrow aria-label="向左滚动"><Triangle dir={90} /></ScrollArrow>
            <Thumb />
            <TrackRest $size={48} />
            <ScrollArrow aria-label="向右滚动"><Triangle dir={270} /></ScrollArrow>
          </HScroll>
        </SheetBar>
        <StatusBar><StatusMark /></StatusBar>
      </Body>
    </Window>
  );
}
